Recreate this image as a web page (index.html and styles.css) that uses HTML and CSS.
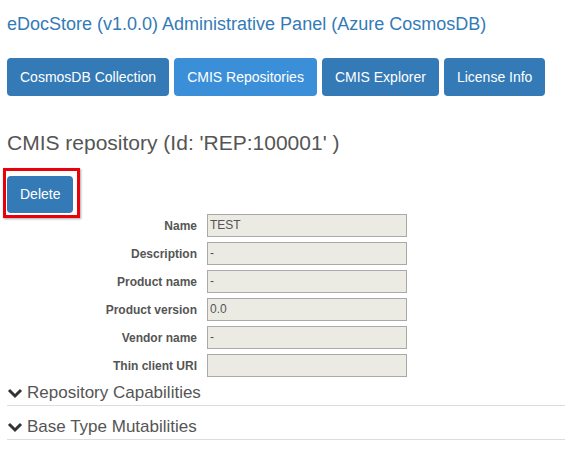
FILE: index.html
```html
<!DOCTYPE html>
<html>
<head>
<meta charset="utf-8">
<link rel="stylesheet" href="styles.css">
</head>
<body>
<div class="page">
  <div class="title">eDocStore (v1.0.0) Administrative Panel (Azure CosmosDB)</div>
  <div class="nav">
    <a class="btn">CosmosDB Collection</a>
    <a class="btn active">CMIS Repositories</a>
    <a class="btn">CMIS Explorer</a>
    <a class="btn">License Info</a>
  </div>
  <h3 class="heading">CMIS repository (Id: 'REP:100001' )</h3>
  <div class="actions">
    <a class="btn btn-delete">Delete</a>
  </div>
  <div class="form">
    <div class="row"><label class="lbl">Name</label><div class="inp">TEST</div></div>
    <div class="row"><label class="lbl">Description</label><div class="inp">-</div></div>
    <div class="row"><label class="lbl">Product name</label><div class="inp">-</div></div>
    <div class="row"><label class="lbl">Product version</label><div class="inp">0.0</div></div>
    <div class="row"><label class="lbl">Vendor name</label><div class="inp">-</div></div>
    <div class="row"><label class="lbl">Thin client URI</label><div class="inp"></div></div>
  </div>
  <div class="acc">
    <div class="acc-item">
      <svg class="chev" width="16" height="11" viewBox="0 0 16 11"><polyline points="2,2 8,8 14,2" fill="none" stroke="#333" stroke-width="3"/></svg>
      <span>Repository Capabilities</span>
    </div>
    <div class="acc-item">
      <svg class="chev" width="16" height="11" viewBox="0 0 16 11"><polyline points="2,2 8,8 14,2" fill="none" stroke="#333" stroke-width="3"/></svg>
      <span>Base Type Mutabilities</span>
    </div>
  </div>
</div>
</body>
</html>
```

FILE: styles.css
```css
html, body {
  margin: 0;
  padding: 0;
  background: #fff;
}
body {
  font-family: "Liberation Sans", Arial, sans-serif;
  color: #555;
}
.page {
  padding: 0 0 0 7px;
}
.title {
  margin-top: 14px;
  font-size: 18px;
  line-height: 20px;
  color: #337ab7;
}
.nav {
  margin-top: 24px;
  display: flex;
  gap: 5px;
}
.btn {
  display: inline-block;
  background: #337ab7;
  color: #fff;
  font-size: 14px;
  line-height: 20px;
  padding: 9px 13px;
  border-radius: 4px;
}
.btn.active {
  background: #3b8fd8;
}
.heading {
  margin: 35px 0 0;
  font-size: 21px;
  line-height: 24px;
  font-weight: normal;
  color: #555;
}
.actions {
  margin-top: 21px;
  display: flex;
}
.btn-delete {
  position: relative;
  line-height: 19px;
  padding: 9px 13px;
}
.btn-delete::after {
  content: "";
  position: absolute;
  left: -4px;
  top: -8px;
  width: 71px;
  height: 44px;
  border: 3px solid #e8000b;
  box-shadow: 1px 1px 2px rgba(0,0,0,0.35);
}
.form {
  margin-top: 1px;
  display: flex;
  flex-direction: column;
  gap: 5px;
}
.row {
  display: flex;
  align-items: center;
  gap: 10px;
}
.lbl {
  width: 190px;
  text-align: right;
  font-size: 12px;
  font-weight: bold;
  color: #555;
}
.inp {
  box-sizing: border-box;
  width: 200px;
  height: 23px;
  background: #ebebe4;
  border: 1px solid #a9a9a9;
  font-size: 12px;
  line-height: 21px;
  padding: 0 2px;
  color: #545454;
}
.acc {
  margin-top: 6px;
}
.acc-item {
  display: flex;
  align-items: center;
  gap: 4px;
  font-size: 17px;
  line-height: 20px;
  padding-bottom: 2px;
  border-bottom: 1px solid #ddd;
}
.acc-item + .acc-item {
  margin-top: 11px;
}
.chev {
  display: block;
}
```
